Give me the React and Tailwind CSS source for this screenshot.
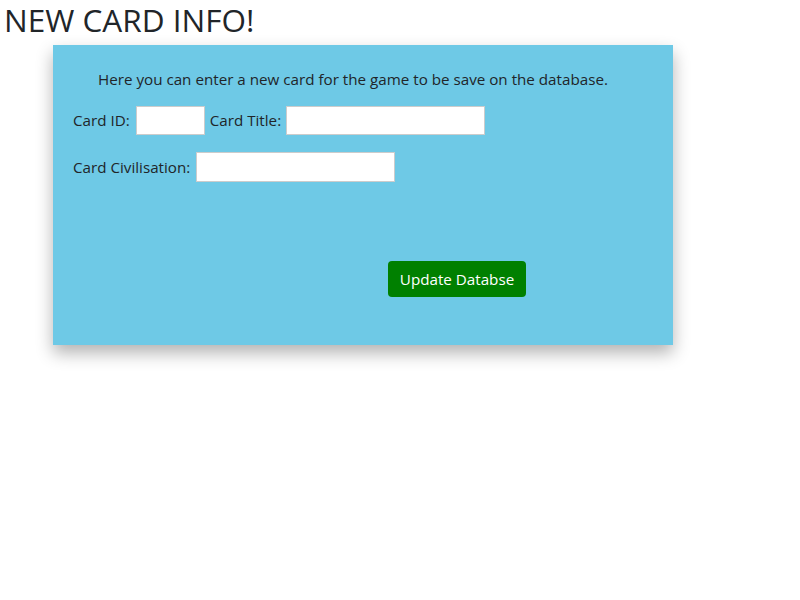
export default function App() {
  return (
    <div className="min-h-[600px] bg-white text-[#212529]" style={{ fontFamily: '"Open Sans", "Noto Sans", sans-serif' }}>
      <h2 className="pl-[4px] text-[31.5px] leading-[40px]">NEW CARD INFO!</h2>
      <div className="ml-[53px] mt-[5px] h-[300px] w-[620px] bg-[#6ec9e6] px-[20px] pt-[22px] text-[15.2px] shadow-[0_8px_16px_rgba(0,0,0,0.3)]">
        <p className="pl-[25px] leading-[24px]">Here you can enter a new card for the game to be save on the database.</p>
        <div className="mt-[15px] flex items-center">
          <span>Card ID:</span>
          <input className="ml-[6px] h-[29px] w-[69px] border border-[#ccc] bg-white" />
          <span className="ml-[5px]">Card Title:</span>
          <input className="ml-[5px] h-[29px] w-[199px] border border-[#ccc] bg-white" />
        </div>
        <div className="mt-[17px] flex items-center">
          <span>Card Civilisation:</span>
          <input className="ml-[6px] h-[30px] w-[199px] border border-[#ccc] bg-white" />
        </div>
        <div className="mt-[79px] pl-[315px]">
          <button className="h-[36px] w-[138px] rounded-[4px] bg-[#008000] text-white">Update Databse</button>
        </div>
      </div>
    </div>
  );
}
